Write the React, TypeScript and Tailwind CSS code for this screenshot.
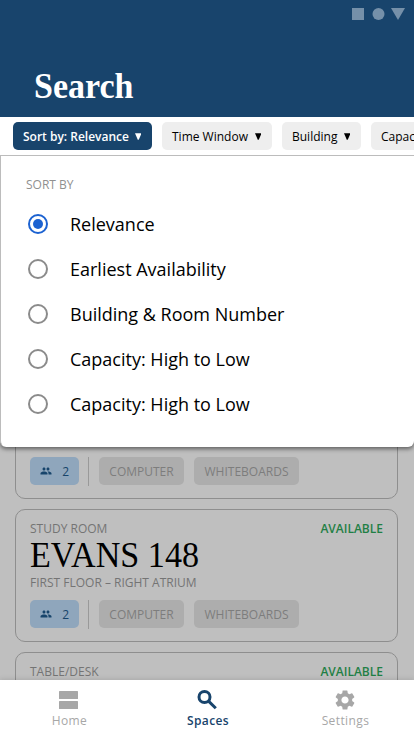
import { MdGroup, MdSettings } from "react-icons/md";

const sans = "font-['Open_Sans','Noto_Sans',sans-serif]";
const serif = "font-['Liberation_Serif','Times_New_Roman',serif]";

function Fit({ children, width, size, x = 0, y, fill, weight = 400, h, family }: {
  children: string; width: number; size: number; x?: number; y: number; fill: string; weight?: number; h: number; family?: string;
}) {
  return (
    <svg width={x + width + 2} height={h} className={`block shrink-0 overflow-visible ${family ?? sans}`}>
      <text x={x} y={y} fontSize={size} fontWeight={weight} fill={fill} textLength={width} lengthAdjust="spacingAndGlyphs">{children}</text>
    </svg>
  );
}

function Pill({ label, className, arrowClass = "fill-black" }: { label: string; className: string; arrowClass?: string }) {
  return (
    <div className={`flex h-7 shrink-0 items-center justify-between rounded-[5px] pr-[11px] pl-[10px] text-[12px] whitespace-nowrap ${className}`}>
      <span className="pt-[2px]">{label}</span>
      <svg width="6.5" height="7" viewBox="0 0 7 7" className={arrowClass}><path d="M0 0h7L4 7H3z" /></svg>
    </div>
  );
}

function Tags() {
  return (
    <div className="flex h-7 items-center text-[12px] text-[#7d7d7d]">
      <div className="flex h-7 w-[49px] items-center justify-between rounded-[5px] bg-[#8fa6bc] pr-[10px] pl-[10px] text-[#17446b]">
        <MdGroup size={12} />
        <span className="pt-[2px]">2</span>
      </div>
      <div className="ml-[9px] h-[29px] w-px shrink-0 bg-[#999]" />
      <div className="ml-[10px] flex h-7 w-[85px] items-center justify-center rounded-[5px] bg-[#adadad] pt-[2px]">COMPUTER</div>
      <div className="ml-[10px] flex h-7 w-[105px] items-center justify-center rounded-[5px] bg-[#adadad] pt-[2px]">WHITEBOARDS</div>
    </div>
  );
}

function Card({ kind, name, place }: { kind?: string; name?: string; place?: string }) {
  return (
    <section className="flex h-[133px] w-[383px] shrink-0 flex-col rounded-[10px] border border-[#8e8e8e] px-[14px] pb-[13px]">
      {kind && (
        <div className="mt-[11px] flex h-4 items-center justify-between text-[12px] text-[#747474]">
          <span>{kind}</span>
          <span className="font-semibold text-[#1f8045]">AVAILABLE</span>
        </div>
      )}
      {name && <Fit width={169} size={36} y={29.5} h={38} fill="#000" family={serif}>{name}</Fit>}
      {place && <div className="h-4 text-[12px] leading-4 text-[#747474]">{place}</div>}
      <div className="mt-auto"><Tags /></div>
    </section>
  );
}

const options = ["Relevance", "Earliest Availability", "Building & Room Number", "Capacity: High to Low", "Capacity: High to Low"];

export default function App() {
  return (
    <div className={`flex h-[736px] w-[414px] flex-col overflow-hidden bg-white ${sans}`}>
      <header className="flex h-[117px] shrink-0 flex-col justify-between bg-[#18446c] pt-2">
        <svg width="54" height="12" viewBox="0 0 54 12" className="mr-[9px] self-end fill-[#7590a9]">
          <path d="M1 0h12v12H1z" /><circle cx="27.5" cy="6" r="6" /><path d="M40 0h14l-7 12z" />
        </svg>
        <div className="flex h-[54px] pl-[34px]">
          <Fit width={99.5} size={36} x={0} y={35} h={48} fill="#fff" weight={700} family={serif}>Search</Fit>
        </div>
      </header>
      <div className="flex h-[38px] shrink-0 gap-[10px] overflow-hidden pt-[5px] pl-[13px]">
        <Pill label="Sort by: Relevance" className="w-[139px] bg-[#18446c] font-semibold text-white" arrowClass="fill-white" />
        <Pill label="Time Window" className="w-[110px] bg-[#eee] font-medium text-black" />
        <Pill label="Building" className="w-[79px] bg-[#eee] font-medium text-black" />
        <Pill label="Capacity" className="w-[84px] bg-[#eee] font-medium text-black" />
      </div>
      <main className="relative h-[525px] shrink-0 overflow-hidden bg-[#bfbfbf]">
        <div className="flex flex-col gap-[10px] pt-[211px] pl-[15px]">
          <Card />
          <Card kind="STUDY ROOM" name="EVANS 148" place="FIRST FLOOR – RIGHT ATRIUM" />
          <Card kind="TABLE/DESK" />
        </div>
        <div className="absolute top-0 left-0 h-[292px] w-[414px] rounded-b-[6px] border-t border-l border-[#bcbcbc] bg-white pl-[25px] shadow-[0_2px_4px_rgba(0,0,0,0.5)]">
          <div className="mt-[20px] h-[18px] text-[12px] leading-[18px] text-[#909090]">SORT BY</div>
          <div className="mt-[7px] flex flex-col">
            {options.map((option, i) => (
              <div key={i} className="flex h-[45px] items-center pl-[2px] text-[18px] text-black">
                <svg width="20" height="20" viewBox="0 0 20 20" className="mr-[22px]">
                  <circle cx="10" cy="10" r="9" fill="white" stroke={i === 0 ? "#1c62d1" : "#8b8b8b"} strokeWidth="2" />
                  {i === 0 && <circle cx="10" cy="10" r="5" fill="#1c62d1" />}
                </svg>
                <span className="pt-[2px]">{option}</span>
              </div>
            ))}
          </div>
        </div>
      </main>
      <nav className="z-10 grid h-14 shrink-0 grid-cols-3 bg-white text-[12px] tracking-[0.4px] text-[#a7a7a7] shadow-[0_-1px_5px_rgba(0,0,0,0.12)]">
        <div className="flex flex-col items-center pt-[11px]">
          <svg width="19" height="18" viewBox="0 0 19 18" className="mr-[2px] fill-current"><rect width="19" height="8" rx=".5" /><rect y="10" width="19" height="8" rx=".5" /></svg>
          <span className="mt-[3px] pl-px leading-[18px]">Home</span>
        </div>
        <div className="flex flex-col items-center pt-[10px] font-semibold text-[#18446c]">
          <svg width="20" height="20" viewBox="0 0 20 20" fill="none" stroke="currentColor" strokeWidth="3" className="mr-px"><circle cx="7.5" cy="7" r="5.5" /><path d="M11 10.6l7.8 7.6" /></svg>
          <span className="mt-[2px] pl-[2px] leading-[18px]">Spaces</span>
        </div>
        <div className="flex flex-col items-center pt-[8px]">
          <MdSettings size={24} />
          <span className="pl-px leading-[18px]">Settings</span>
        </div>
      </nav>
    </div>
  );
}
